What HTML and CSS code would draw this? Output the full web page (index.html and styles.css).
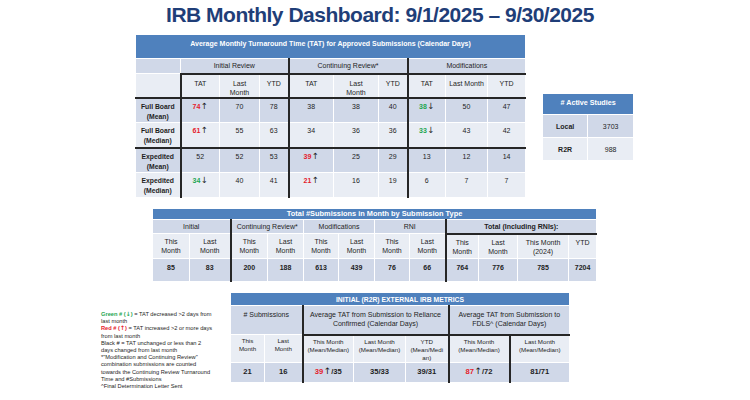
FILE: index.html
```html
<!DOCTYPE html>
<html>
<head>
<meta charset="utf-8">
<link rel="stylesheet" href="styles.css">
</head>
<body>
<div class="page">
  <h1 class="title">IRB Monthly Dashboard: 9/1/2025 – 9/30/2025</h1>

  <div class="row1">
    <table class="t t1">
      <colgroup>
        <col style="width:45px"><col style="width:39px"><col style="width:40px"><col style="width:29px">
        <col style="width:45px"><col style="width:45px"><col style="width:29px">
        <col style="width:38px"><col style="width:42px"><col style="width:38px">
      </colgroup>
      <tr class="hd"><th colspan="10">Average Monthly Turnaround Time (TAT) for Approved Submissions (Calendar Days)</th></tr>
      <tr class="grp dark"><td></td><td colspan="3">Initial Review</td><td colspan="3" class="bl">Continuing Review*</td><td colspan="3" class="bl">Modifications</td></tr>
      <tr class="sub light">
        <td></td>
        <td class="bl bt">TAT</td><td class="bt">Last<br>Month</td><td class="bt">YTD</td>
        <td class="bl bt">TAT</td><td class="bt">Last<br>Month</td><td class="bt">YTD</td>
        <td class="bl bt">TAT</td><td class="bt">Last Month</td><td class="bt">YTD</td>
      </tr>
      <tr class="data dark bt-row">
        <td class="lbl">Full Board<br>(Mean)</td>
        <td class="bl"><span class="up">74</span><span class="ar">↑</span></td><td>70</td><td>78</td>
        <td class="bl">38</td><td>38</td><td>40</td>
        <td class="bl"><span class="down">38</span><span class="ar">↓</span></td><td>50</td><td>47</td>
      </tr>
      <tr class="data light">
        <td class="lbl">Full Board<br>(Median)</td>
        <td class="bl"><span class="up">61</span><span class="ar">↑</span></td><td>55</td><td>63</td>
        <td class="bl">34</td><td>36</td><td>36</td>
        <td class="bl"><span class="down">33</span><span class="ar">↓</span></td><td>43</td><td>42</td>
      </tr>
      <tr class="data dark bt-row">
        <td class="lbl">Expedited<br>(Mean)</td>
        <td class="bl">52</td><td>52</td><td>53</td>
        <td class="bl"><span class="up">39</span><span class="ar">↑</span></td><td>25</td><td>29</td>
        <td class="bl">13</td><td>12</td><td>14</td>
      </tr>
      <tr class="data light">
        <td class="lbl">Expedited<br>(Median)</td>
        <td class="bl"><span class="down">34</span><span class="ar">↓</span></td><td>40</td><td>41</td>
        <td class="bl"><span class="up">21</span><span class="ar">↑</span></td><td>16</td><td>19</td>
        <td class="bl">6</td><td>7</td><td>7</td>
      </tr>
    </table>

    <table class="t active">
      <colgroup><col style="width:45px"><col style="width:46px"></colgroup>
      <tr class="hd"><th colspan="2"># Active Studies</th></tr>
      <tr class="dark"><td class="lbl">Local</td><td>3703</td></tr>
      <tr class="light"><td class="lbl">R2R</td><td>988</td></tr>
    </table>
  </div>

  <div class="row2">
    <table class="t t2">
      <colgroup>
        <col style="width:37px"><col style="width:41px">
        <col style="width:37px"><col style="width:36px">
        <col style="width:35px"><col style="width:36px">
        <col style="width:35px"><col style="width:36px">
        <col style="width:33px"><col style="width:39px"><col style="width:51px"><col style="width:28px">
      </colgroup>
      <tr class="hd"><th colspan="12">Total #Submissions in Month by Submission Type</th></tr>
      <tr class="grp dark">
        <td colspan="2">Initial</td><td colspan="2" class="bl">Continuing Review*</td>
        <td colspan="2">Modifications</td><td colspan="2">RNI</td>
        <td colspan="4" class="bl b">Total (Including RNIs):</td>
      </tr>
      <tr class="sub light">
        <td>This<br>Month</td><td>Last<br>Month</td>
        <td class="bl">This<br>Month</td><td>Last<br>Month</td>
        <td>This<br>Month</td><td>Last<br>Month</td>
        <td>This<br>Month</td><td>Last<br>Month</td>
        <td class="bl bt">This<br>Month</td><td class="bt">Last<br>Month</td><td class="bt">This Month<br>(2024)</td><td class="bt">YTD</td>
      </tr>
      <tr class="data dark">
        <td>85</td><td>83</td><td class="bl">200</td><td>188</td><td>613</td><td>439</td><td>76</td><td>66</td>
        <td class="bl">764</td><td>776</td><td>785</td><td>7204</td>
      </tr>
    </table>
  </div>

  <div class="row3">
    <p class="legend">
      <span class="g">Green # (<span class="ar">↓</span>)</span> = TAT decreased &gt;2 days from<br>
      last month<br>
      <span class="r">Red # (<span class="ar">↑</span>)</span> = TAT increased &gt;2 or more days<br>
      from last month<br>
      Black # = TAT unchanged or less than 2<br>
      days changed from last month<br>
      *"Modification and Continuing Review"<br>
      combination submissions are counted<br>
      towards the Continuing Review Turnaround<br>
      Time and #Submissions<br>
      ^Final Determination Letter Sent
    </p>

    <table class="t t3">
      <colgroup>
        <col style="width:34px"><col style="width:38px">
        <col style="width:51px"><col style="width:52px"><col style="width:43px">
        <col style="width:61px"><col style="width:60px">
      </colgroup>
      <tr class="hd"><th colspan="7">INITIAL (R2R) EXTERNAL IRB METRICS</th></tr>
      <tr class="grp dark">
        <td colspan="2"># Submissions</td>
        <td colspan="3" class="bl">Average TAT from Submission to Reliance<br>Confirmed (Calendar Days)</td>
        <td colspan="2" class="bl">Average TAT from Submission to<br>FDLS^ (Calendar Days)</td>
      </tr>
      <tr class="sub light">
        <td>This<br>Month</td><td>Last<br>Month</td>
        <td class="bl bt">This Month<br>(Mean/Median)</td><td class="bt">Last Month<br>(Mean/Median)</td><td class="bt">YTD<br>(Mean/Medi<br>an)</td>
        <td class="bl bt">This Month<br>(Mean/Median)</td><td class="bl bt">Last Month<br>(Mean/Median)</td>
      </tr>
      <tr class="data dark">
        <td>21</td><td>16</td>
        <td class="bl"><span class="up">39</span><span class="ar">↑</span>/35</td><td>35/33</td><td>39/31</td>
        <td class="bl"><span class="up">87</span><span class="ar">↑</span>/72</td><td class="bl">81/71</td>
      </tr>
    </table>
  </div>
</div>
</body>
</html>
```

FILE: styles.css
```css
html, body {
  margin: 0;
  padding: 0;
  background: #ffffff;
}

body {
  font-family: "Liberation Sans", Arial, sans-serif;
  color: #1e1e1e;
}

.page {
  width: 750px;
  height: 400px;
  overflow: hidden;
}

.title {
  margin: 0 0 6px 0;
  padding: 2px 0 0 10px;
  height: 26px;
  line-height: 26px;
  text-align: center;
  font-size: 21px;
  font-weight: bold;
  letter-spacing: -0.5px;
  color: #1f3e78;
  white-space: nowrap;
}

.row1 {
  display: flex;
  align-items: flex-start;
  gap: 16px;
  padding-left: 135px;
}

.row2 {
  margin-top: 10px;
  padding-left: 152px;
}

.row3 {
  display: flex;
  align-items: flex-start;
  margin-top: 10px;
  padding-left: 101px;
}

/* generic table */
.t {
  border-collapse: collapse;
  table-layout: fixed;
  font-size: 7px;
  line-height: 9px;
}

.t td,
.t th {
  border: 1px solid #ffffff;
  padding: 0 1px;
  text-align: center;
  vertical-align: top;
  overflow: hidden;
  white-space: nowrap;
}

.t .hd th {
  background: #4f81bd;
  color: #ffffff;
  font-weight: bold;
  font-size: 7px;
}

.dark td { background: #d0d8e8; }
.light td { background: #e9edf4; }

.bl { border-left: 2px solid #262626 !important; }
.bt { border-top: 2px solid #262626 !important; }
.bt-row td { border-top: 2px solid #262626 !important; }

.lbl { font-weight: bold; }
.b { font-weight: bold; }

.up { color: #e5202a; font-weight: bold; }
.down { color: #1ea651; font-weight: bold; }

.ar {
  font-family: "DejaVu Sans", sans-serif;
  font-size: 8.5px;
  font-weight: normal;
  color: #1e1e1e;
  line-height: 1;
  margin-left: 0.5px;
}

/* table 1 */
.t1 { width: 391px; }
.t1 .hd { height: 24px; }
.t1 .hd th { padding-top: 4px; }
.t1 .grp { height: 15px; }
.t1 .grp td { vertical-align: middle; }
.t1 .sub { height: 24px; }
.t1 .sub td { padding-top: 4px; }
.t1 .data { height: 25px; }
.t1 .data td { padding-top: 3px; line-height: 10px; }
.t1 .data td.lbl { padding-top: 3px; font-size: 6.8px; }

/* active studies */
.active {
  width: 91px;
  margin-top: 59px;
}
.active .hd { height: 21px; }
.active .hd th { padding-top: 4px; font-size: 7.2px; }
.active tr { height: 23px; }
.active td { vertical-align: middle; font-size: 7px; }

/* table 2 */
.t2 { width: 444px; }
.t2 .hd { height: 11px; }
.t2 .hd th { padding-top: 1px; line-height: 8px; font-size: 7.4px; }
.t2 .grp { height: 14px; }
.t2 .grp td { vertical-align: middle; }
.t2 .sub { height: 25px; }
.t2 .sub td { padding-top: 3px; }
.t2 .data { height: 23px; }
.t2 .data td { padding-top: 4px; font-weight: bold; }

/* legend */
.legend {
  margin: 19px 0 0 0;
  width: 129px;
  font-size: 5.7px;
  line-height: 7.2px;
  white-space: nowrap;
  color: #1e1e1e;
}
.legend .g { color: #1ea651; font-weight: bold; }
.legend .r { color: #e5202a; font-weight: bold; }
.legend .ar { font-size: 6px; color: inherit; font-weight: bold; margin: 0; }

/* table 3 */
.t3 { width: 339px; }
.t3 .hd { height: 13px; }
.t3 .hd th { padding-top: 2px; font-size: 6.8px; }
.t3 .grp { height: 29px; }
.t3 .grp td { padding-top: 4px; }
.t3 .sub { height: 27px; }
.t3 .sub td { padding-top: 2px; font-size: 6.2px; line-height: 8px; }
.t3 .data { height: 20px; }
.t3 .data td { padding-top: 4px; font-size: 7.6px; font-weight: bold; }
.t3 .data .ar { font-size: 9px; }
```
